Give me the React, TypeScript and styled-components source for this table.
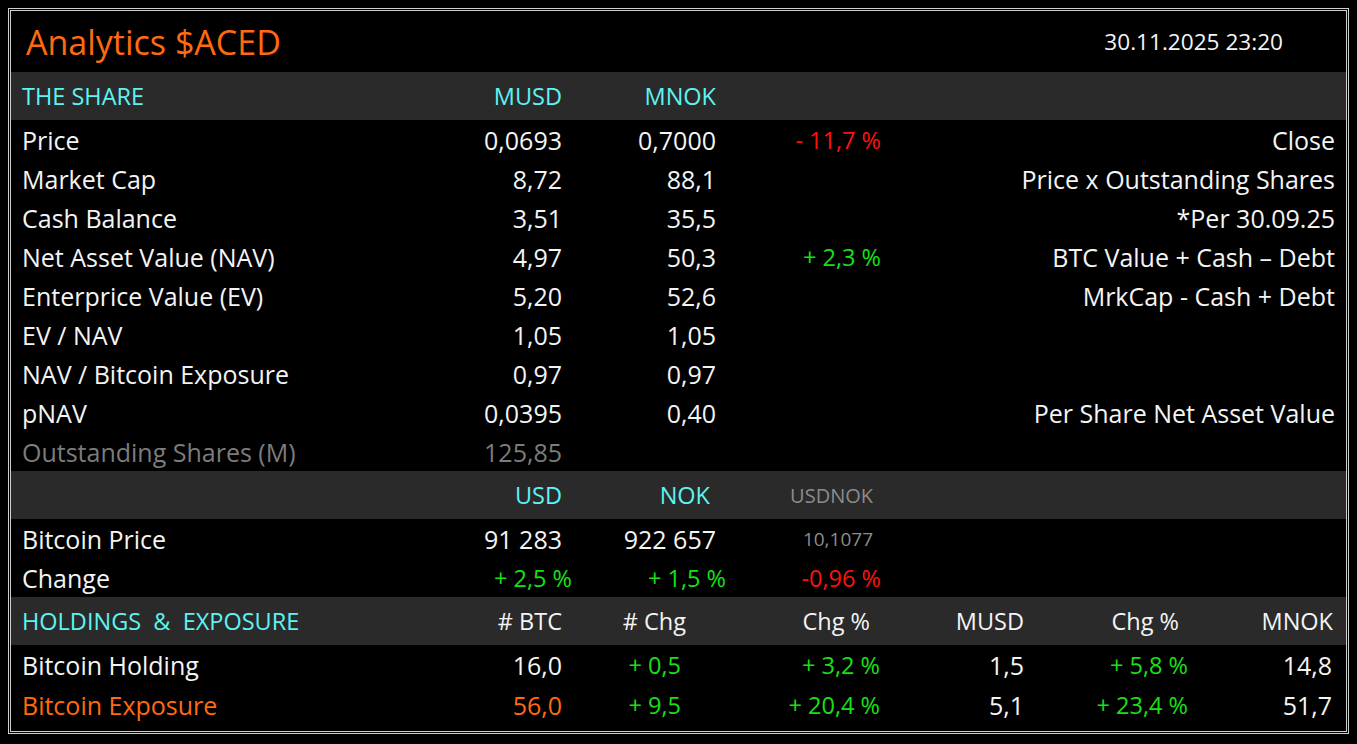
import React from 'react';
import styled, {createGlobalStyle} from 'styled-components';

type Tone = 'white' | 'cyan' | 'green' | 'red' | 'orange' | 'dim' | 'grey';
type Size = 'body' | 'head' | 'chg' | 'small' | 'tiny';

const tones: Record<Tone, string> = {
    white: '#f4f4f4',
    cyan: '#5ef3f3',
    green: '#16e016',
    red: '#ff1010',
    orange: '#ff6a10',
    dim: '#7c7c7c',
    grey: '#8c8c8c',
};

const sizes: Record<Size, string> = {
    body: '25px',
    head: '23.5px',
    chg: '23.5px',
    small: '20px',
    tiny: '19px',
};

const SHARE_COLS = '378px 162px 154px 165px 1fr';
const HOLD_COLS = '378px 162px 124px 184px 154px 155px 1fr';

const shareRows = [
    {label: 'Price', usd: '0,0693', nok: '0,7000', chg: '- 11,7 %', chgTone: 'red' as Tone, note: 'Close'},
    {label: 'Market Cap', usd: '8,72', nok: '88,1', note: 'Price x Outstanding Shares'},
    {label: 'Cash Balance', usd: '3,51', nok: '35,5', note: '*Per 30.09.25'},
    {label: 'Net Asset Value (NAV)', usd: '4,97', nok: '50,3', chg: '+ 2,3 %', chgTone: 'green' as Tone, note: 'BTC Value + Cash \u2013 Debt'},
    {label: 'Enterprice Value (EV)', usd: '5,20', nok: '52,6', note: 'MrkCap - Cash + Debt'},
    {label: 'EV / NAV', usd: '1,05', nok: '1,05'},
    {label: 'NAV / Bitcoin Exposure', usd: '0,97', nok: '0,97'},
    {label: 'pNAV', usd: '0,0395', nok: '0,40', note: 'Per Share Net Asset Value'},
];

export default function App() {
    return (
        <>
            <GlobalStyle/>
            <Frame>
                <TitleBar>
                    <Title>Analytics $ACED</Title>
                    <Stamp>30.11.2025 23:20</Stamp>
                </TitleBar>

                <HeadRow cols={SHARE_COLS}>
                    <Cell tone={'cyan'} size={'head'}>THE SHARE</Cell>
                    <Cell right tone={'cyan'} size={'head'}>MUSD</Cell>
                    <Cell right tone={'cyan'} size={'head'}>MNOK</Cell>
                </HeadRow>
                {shareRows.map(r => (
                    <Row cols={SHARE_COLS} key={r.label}>
                        <Cell>{r.label}</Cell>
                        <Cell right>{r.usd}</Cell>
                        <Cell right>{r.nok}</Cell>
                        <Cell right size={'chg'} tone={r.chgTone}>{r.chg}</Cell>
                        <Cell right>{r.note}</Cell>
                    </Row>
                ))}
                <Row cols={SHARE_COLS}>
                    <Cell tone={'dim'}>Outstanding Shares (M)</Cell>
                    <Cell right tone={'dim'}>125,85</Cell>
                </Row>

                <HeadRow cols={SHARE_COLS}>
                    <Cell/>
                    <Cell right tone={'cyan'} size={'head'}>USD</Cell>
                    <Cell right tone={'cyan'} size={'head'} nudge={6}>NOK</Cell>
                    <Cell right tone={'grey'} size={'small'} nudge={8}>USDNOK</Cell>
                </HeadRow>
                <Row cols={SHARE_COLS}>
                    <Cell>Bitcoin Price</Cell>
                    <Cell right>91 283</Cell>
                    <Cell right>922 657</Cell>
                    <Cell right tone={'grey'} size={'tiny'} nudge={8}>10,1077</Cell>
                </Row>
                <Row cols={SHARE_COLS}>
                    <Cell>Change</Cell>
                    <Cell right size={'chg'} tone={'green'} nudge={-10}>+ 2,5 %</Cell>
                    <Cell right size={'chg'} tone={'green'} nudge={-10}>+ 1,5 %</Cell>
                    <Cell right size={'chg'} tone={'red'}>-0,96 %</Cell>
                </Row>

                <HeadRow cols={HOLD_COLS}>
                    <Cell tone={'cyan'} size={'head'} pre>HOLDINGS  &amp;  EXPOSURE</Cell>
                    <Cell right size={'head'}># BTC</Cell>
                    <Cell right size={'head'}># Chg</Cell>
                    <Cell right size={'head'}>Chg %</Cell>
                    <Cell right size={'head'}>MUSD</Cell>
                    <Cell right size={'head'}>Chg %</Cell>
                    <Cell right size={'head'} nudge={2}>MNOK</Cell>
                </HeadRow>
                <HoldRow cols={HOLD_COLS}>
                    <Cell>Bitcoin Holding</Cell>
                    <Cell right>16,0</Cell>
                    <Cell right size={'chg'} tone={'green'} nudge={5}>+ 0,5</Cell>
                    <Cell right size={'chg'} tone={'green'} nudge={-10}>+ 3,2 %</Cell>
                    <Cell right>1,5</Cell>
                    <Cell right size={'chg'} tone={'green'} nudge={-9}>+ 5,8 %</Cell>
                    <Cell right nudge={3}>14,8</Cell>
                </HoldRow>
                <HoldRow cols={HOLD_COLS}>
                    <Cell tone={'orange'}>Bitcoin Exposure</Cell>
                    <Cell right tone={'orange'}>56,0</Cell>
                    <Cell right size={'chg'} tone={'green'} nudge={5}>+ 9,5</Cell>
                    <Cell right size={'chg'} tone={'green'} nudge={-10}>+ 20,4 %</Cell>
                    <Cell right>5,1</Cell>
                    <Cell right size={'chg'} tone={'green'} nudge={-9}>+ 23,4 %</Cell>
                    <Cell right nudge={3}>51,7</Cell>
                </HoldRow>
            </Frame>
        </>
    );
}

const GlobalStyle = createGlobalStyle`
    html {
        background: #000;
    }
    body {
        margin: 8px;
        background: #000;
        color: ${tones.white};
        font-family: "Open Sans", "Noto Sans", "Liberation Sans", sans-serif;
    }
`

const Frame = styled.main`
    box-sizing: border-box;
    height: 726px;
    border: 3px double #d0d0d0;
    display: flex;
    flex-direction: column;
`

const TitleBar = styled.header`
    height: 61px;
    display: flex;
    align-items: center;
    justify-content: space-between;
    padding: 0 63px 0 15px;
`

const Title = styled.h1`
    margin: 0;
    font-size: 34px;
    font-weight: 400;
    color: ${tones.orange};
`

const Stamp = styled.span`
    font-size: 22.6px;
    color: ${tones.white};
`

type GridProps = {
    cols: string
}

const Row = styled.div<GridProps>`
    display: grid;
    grid-template-columns: ${props => props.cols};
    align-items: center;
    height: 39px;
    padding: 0 11px;
`

const HeadRow = styled(Row)`
    height: 48px;
    background: #2a2a2a;
`

const HoldRow = styled(Row)`
    height: 40px;
`

type CellProps = {
    right?: boolean
    tone?: Tone
    size?: Size
    nudge?: number
    pre?: boolean
}

const Cell = styled.span<CellProps>`
    justify-self: ${props => props.right ? 'end' : 'start'};
    margin-right: ${props => props.right ? (props.nudge || 0) : 0}px;
    color: ${props => tones[props.tone || 'white']};
    font-size: ${props => sizes[props.size || 'body']};
    white-space: ${props => props.pre ? 'pre' : 'nowrap'};
`
